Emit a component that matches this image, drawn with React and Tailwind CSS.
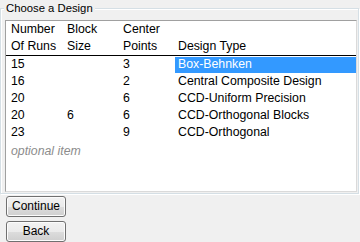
export default function App() {
  const rows = [
    { n: "15", b: "", c: "3", t: "Box-Behnken", sel: true },
    { n: "16", b: "", c: "2", t: "Central Composite Design" },
    { n: "20", b: "", c: "6", t: "CCD-Uniform Precision" },
    { n: "20", b: "6", c: "6", t: "CCD-Orthogonal Blocks" },
    { n: "23", b: "", c: "9", t: "CCD-Orthogonal" },
  ];
  const btn =
    "w-[60px] h-[21px] rounded-[3px] border border-[#707070] bg-[linear-gradient(#f2f2f2_0%,#ebebeb_50%,#dddddd_50%,#cfcfcf_100%)] shadow-[inset_0_0_0_1px_#fcfcfc] text-[12px] leading-[19px] text-black flex items-center justify-center";
  return (
    <div
      className="w-[360px] h-[242px] overflow-hidden bg-[#f0f0f0] flex flex-col"
      style={{ fontFamily: '"Liberation Sans", Arial, sans-serif' }}
    >
      <div className="pt-[8px]">
        <div className="relative w-[359px] h-[186px] border border-[#d5dfe5] shadow-[inset_1px_1px_0_#ffffff,1px_1px_0_#ffffff]">
          <div className="absolute -top-[8px] left-[3px] px-[2px] bg-[#f0f0f0] text-[11.3px] leading-[14px] text-black">
            Choose a Design
          </div>
          <div className="mt-[11px] ml-[4px] w-[352px] h-[172px] bg-white border border-t-[#a0a0a0] border-l-[#a0a0a0] border-r-[#dadada] border-b-[#dadada] text-[12.3px] leading-[17px] text-black">
            <div className="grid grid-cols-[61px_56px_52px_1fr] border-b border-black">
              <div className="pl-[5px]">
                Number
                <br />
                Of Runs
              </div>
              <div>
                Block
                <br />
                Size
              </div>
              <div>
                Center
                <br />
                Points
              </div>
              <div className="pl-[3px] pt-[17px]">Design Type</div>
            </div>
            {rows.map((r, i) => (
              <div key={i} className="grid grid-cols-[61px_56px_52px_1fr] h-[17px]">
                <div className="pl-[5px]">{r.n}</div>
                <div>{r.b}</div>
                <div>{r.c}</div>
                <div
                  className={
                    r.sel
                      ? "pl-[3px] bg-[#3399ff] shadow-[inset_0_1px_0_#ffffff] text-white"
                      : "pl-[3px]"
                  }
                >
                  {r.t}
                </div>
              </div>
            ))}
            <div className="pl-[5px] mt-[2px] italic text-[#8c8c8c]">optional item</div>
          </div>
        </div>
      </div>
      <div className="ml-[6px] mt-[2px] flex flex-col gap-[4px]">
        <div className={btn}>Continue</div>
        <div className={btn}>Back</div>
      </div>
    </div>
  );
}
